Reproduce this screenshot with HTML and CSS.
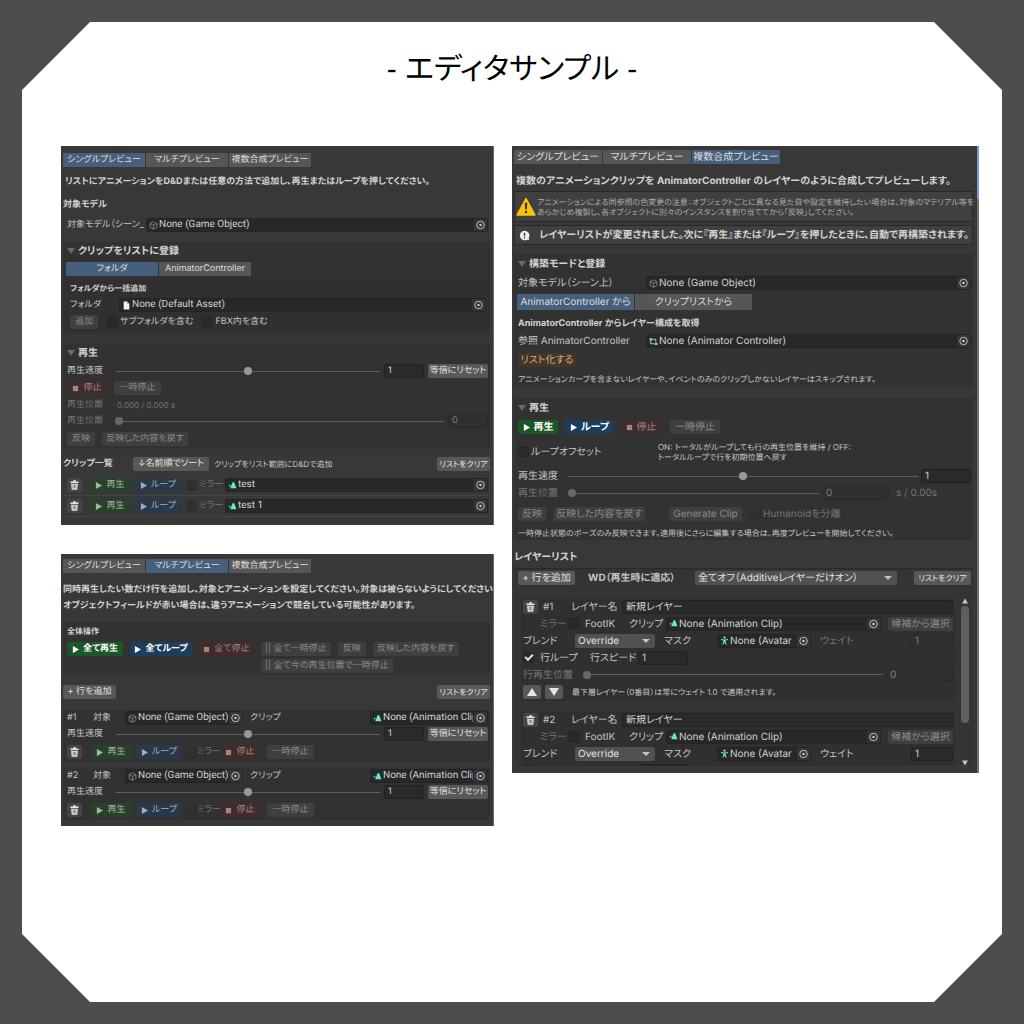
FILE: index.html
```
<!DOCTYPE html>
<html lang="ja">
<head>
    <meta charset="UTF-8">
    <meta name="viewport" content="width=device-width, initial-scale=1">
    <title>エディタサンプル</title>
    <link rel="stylesheet" href="styles.css">
</head>
<body>
    <svg class="symbols" aria-hidden="true">
        <symbol id="cube" viewBox="0 0 16 16"><path d="M8 1.500 14 4.500V11.500L8 14.500 2 11.500V4.500ZM2 4.500 8 7.500 14 4.500M8 7.500V14.500" fill="none" stroke="#a0a0a0" stroke-width="1.200"/></symbol>
        <symbol id="doc" viewBox="0 0 16 16"><path d="M3 1H9L13 5V15H3Z" fill="#f2f2f2"/><path d="M9 1V5H13Z" fill="#a5a5a5"/></symbol>
        <symbol id="clip" viewBox="0 0 16 16"><path d="M8 2H11L15 13H4ZM1 8 4 6V11Z" fill="#6be8cd"/></symbol>
        <symbol id="avatar" viewBox="0 0 16 16"><circle cx="8" cy="3" r="2" fill="#6be8cd"/><path d="M2 5 6 6H10L14 5V7L10 8V10L12 15H10L8 11 6 15H4L6 10V8L2 7Z" fill="#6be8cd"/></symbol>
        <symbol id="controller" viewBox="0 0 16 16"><path d="M1 2H6V6H1ZM10 10H15V14H10Z" fill="#6be8cd"/><path d="M6 4H12V9M3 6V12H9" fill="none" stroke="#d2d2d2" stroke-width="1.500"/></symbol>
        <symbol id="pick" viewBox="0 0 16 16"><circle cx="8" cy="8" r="6" fill="none" stroke="#c4c4c4" stroke-width="1.500"/><circle cx="8" cy="8" r="2" fill="#c4c4c4"/></symbol>
        <symbol id="trash" viewBox="0 0 16 16"><path d="M2 3H6V1H10V3H14V5H2ZM3 6H13L12 15H4Z" fill="#e4e4e4"/><path d="M6 7.500V13M8 7.500V13M10 7.500V13" stroke="#555" stroke-width=".9"/></symbol>
        <symbol id="play" viewBox="0 0 8 8"><path d="M1 0 8 4 1 8Z" fill="currentColor"/></symbol>
        <symbol id="stop" viewBox="0 0 8 8"><path d="M1 1H7V7H1Z" fill="currentColor"/></symbol>
        <symbol id="up" viewBox="0 0 10 10"><path d="M5 1 10 9H0Z" fill="currentColor"/></symbol>
        <symbol id="down" viewBox="0 0 10 10"><path d="M5 9 10 1H0Z" fill="currentColor"/></symbol>
        <symbol id="warning" viewBox="0 0 24 24"><path d="M12 2 22.500 21.500H1.500Z" fill="#ffc107" stroke="#ffc107" stroke-width="2" stroke-linejoin="round"/><path d="M10.500 7H13.500L13 15H11Z" fill="#333"/><circle cx="12" cy="18" r="1.500" fill="#333"/></symbol>
        <symbol id="info" viewBox="0 0 16 16"><path d="M8 1A7 7 0 1 0 12 14L15 15 14 12A7 7 0 0 0 8 1Z" fill="#eee"/><path d="M7 4H9V9H7ZM7 10.500H9V12.500H7Z" fill="#333"/></symbol>
    </svg>

    <main class="sheet">
        <h1>- エディタサンプル -</h1>
        <div class="columns">
            <div class="column">

                <!-- シングルプレビュー -->
                <section class="panel">
                    <div class="tabs">
                        <button class="tab active">シングルプレビュー</button>
                        <button class="tab">マルチプレビュー</button>
                        <button class="tab">複数合成プレビュー</button>
                    </div>
                    <p class="lead">リストにアニメーションをD&amp;Dまたは任意の方法で追加し、再生またはループを押してください。</p>
                    <h2>対象モデル</h2>
                    <div class="row h22">
                        <span class="label target-label">対象モデル（シーン_</span>
                        <button class="object grow"><svg><use href="#cube"/></svg><span>None (Game Object)</span><svg class="pick"><use href="#pick"/></svg></button>
                    </div>

                    <div class="box register">
                        <h3>クリップをリストに登録</h3>
                        <div class="tabs modes">
                            <button class="tab active">フォルダ</button>
                            <button class="tab">AnimatorController</button>
                        </div>
                        <div class="inner">
                            <h4>フォルダから一括追加</h4>
                            <div class="row h16">
                                <span class="label folder-label">フォルダ</span>
                                <button class="object grow"><svg><use href="#doc"/></svg><span>None (Default Asset)</span><svg class="pick"><use href="#pick"/></svg></button>
                            </div>
                            <div class="row h18 folder-options">
                                <button class="btn off apply">追加</button>
                                <label class="check"><input type="checkbox">サブフォルダを含む</label>
                                <label class="check"><input type="checkbox">FBX内を含む</label>
                            </div>
                        </div>
                    </div>

                    <div class="box">
                        <h3>再生</h3>
                        <div class="row h16">
                            <label class="label speed-label" for="speed1">再生速度</label>
                            <input class="grow" type="range" id="speed1" value="50">
                            <input class="num" type="text" value="1" aria-label="再生速度">
                            <button class="btn reset">等倍にリセット</button>
                        </div>
                        <div class="row h18 gap">
                            <button class="btn stop"><svg><use href="#stop"/></svg>停止</button>
                            <button class="btn off pause">一時停止</button>
                        </div>
                        <div class="row h16 dim">
                            <span class="label speed-label">再生位置</span>
                            <span class="time">0.000 / 0.000 s</span>
                        </div>
                        <div class="row h16 dim">
                            <label class="label speed-label" for="pos1">再生位置</label>
                            <input class="grow" type="range" id="pos1" value="0" disabled>
                            <input class="num" type="text" value="0" disabled aria-label="再生位置">
                        </div>
                        <div class="row h20 gap">
                            <button class="btn off apply">反映</button>
                            <button class="btn off revert">反映した内容を戻す</button>
                        </div>
                    </div>

                    <div class="row h22 clips-head">
                        <h2>クリップ一覧</h2>
                        <button class="btn sort">↓名前順でソート</button>
                        <small class="grow">クリップをリスト範囲にD&amp;Dで追加</small>
                        <button class="btn clear">リストをクリア</button>
                    </div>
                    <div class="row clip">
                        <button class="trash" aria-label="削除"><svg><use href="#trash"/></svg></button>
                        <button class="btn play"><svg><use href="#play"/></svg>再生</button>
                        <button class="btn loop"><svg><use href="#play"/></svg>ループ</button>
                        <label class="check mirror"><input type="checkbox" disabled>ミラー</label>
                        <button class="object grow"><svg><use href="#clip"/></svg><span>test</span><svg class="pick"><use href="#pick"/></svg></button>
                    </div>
                    <div class="row clip">
                        <button class="trash" aria-label="削除"><svg><use href="#trash"/></svg></button>
                        <button class="btn play"><svg><use href="#play"/></svg>再生</button>
                        <button class="btn loop"><svg><use href="#play"/></svg>ループ</button>
                        <label class="check mirror"><input type="checkbox" disabled>ミラー</label>
                        <button class="object grow"><svg><use href="#clip"/></svg><span>test 1</span><svg class="pick"><use href="#pick"/></svg></button>
                    </div>
                </section>

                <!-- マルチプレビュー -->
                <section class="panel multi">
                    <div class="tabs">
                        <button class="tab">シングルプレビュー</button>
                        <button class="tab active">マルチプレビュー</button>
                        <button class="tab">複数合成プレビュー</button>
                    </div>
                    <p class="lead">同時再生したい数だけ行を追加し、対象とアニメーションを設定してください。対象は被らないようにしてください<br>オブジェクトフィールドが赤い場合は、違うアニメーションで競合している可能性があります。</p>
                    <div class="box all">
                        <h4>全体操作</h4>
                        <div class="row gap all-buttons">
                            <button class="btn play on"><svg><use href="#play"/></svg>全て再生</button>
                            <button class="btn loop on"><svg><use href="#play"/></svg>全てループ</button>
                            <button class="btn stop"><svg><use href="#stop"/></svg>全て停止</button>
                            <div class="pause-group">
                                <button class="btn off">|| 全て一時停止</button>
                                <button class="btn off apply">反映</button>
                                <button class="btn off revert">反映した内容を戻す</button>
                                <button class="btn off">|| 全て今の再生位置で一時停止</button>
                            </div>
                        </div>
                    </div>
                    <div class="row h20 add-row">
                        <button class="btn add">+ 行を追加</button>
                        <button class="btn clear">リストをクリア</button>
                    </div>
                    <div class="item">
                        <div class="row h16">
                            <span class="label num-label">#1</span>
                            <span class="label obj-label">対象</span>
                            <button class="object fixed"><svg><use href="#cube"/></svg><span>None (Game Object)</span><svg class="pick"><use href="#pick"/></svg></button>
                            <span class="label clip-label grow">クリップ</span>
                            <button class="object fixed"><svg><use href="#clip"/></svg><span>None (Animation Clip</span><svg class="pick"><use href="#pick"/></svg></button>
                        </div>
                        <div class="row h16">
                            <label class="label speed-label" for="speed2">再生速度</label>
                            <input class="grow" type="range" id="speed2" value="50">
                            <input class="num" type="text" value="1" aria-label="再生速度">
                            <button class="btn reset">等倍にリセット</button>
                        </div>
                        <div class="row h20 item-buttons">
                            <button class="trash" aria-label="削除"><svg><use href="#trash"/></svg></button>
                            <button class="btn play"><svg><use href="#play"/></svg>再生</button>
                            <button class="btn loop"><svg><use href="#play"/></svg>ループ</button>
                            <label class="check mirror"><input type="checkbox" disabled>ミラー</label>
                            <button class="btn stop"><svg><use href="#stop"/></svg>停止</button>
                            <button class="btn off pause">一時停止</button>
                        </div>
                    </div>
                    <div class="item">
                        <div class="row h16">
                            <span class="label num-label">#2</span>
                            <span class="label obj-label">対象</span>
                            <button class="object fixed"><svg><use href="#cube"/></svg><span>None (Game Object)</span><svg class="pick"><use href="#pick"/></svg></button>
                            <span class="label clip-label grow">クリップ</span>
                            <button class="object fixed"><svg><use href="#clip"/></svg><span>None (Animation Clip</span><svg class="pick"><use href="#pick"/></svg></button>
                        </div>
                        <div class="row h16">
                            <label class="label speed-label" for="speed3">再生速度</label>
                            <input class="grow" type="range" id="speed3" value="50">
                            <input class="num" type="text" value="1" aria-label="再生速度">
                            <button class="btn reset">等倍にリセット</button>
                        </div>
                        <div class="row h20 item-buttons">
                            <button class="trash" aria-label="削除"><svg><use href="#trash"/></svg></button>
                            <button class="btn play"><svg><use href="#play"/></svg>再生</button>
                            <button class="btn loop"><svg><use href="#play"/></svg>ループ</button>
                            <label class="check mirror"><input type="checkbox" disabled>ミラー</label>
                            <button class="btn stop"><svg><use href="#stop"/></svg>停止</button>
                            <button class="btn off pause">一時停止</button>
                        </div>
                    </div>
                </section>
            </div>

            <!-- 複数合成プレビュー -->
            <section class="panel large">
                <div class="tabs">
                    <button class="tab">シングルプレビュー</button>
                    <button class="tab">マルチプレビュー</button>
                    <button class="tab active">複数合成プレビュー</button>
                </div>
                <p class="lead">複数のアニメーションクリップを AnimatorController のレイヤーのように合成してプレビューします。</p>
                <div class="help">
                    <svg class="warning"><use href="#warning"/></svg>
                    <p>アニメーションによる同参照の色変更の注意：オブジェクトごとに異なる見た目や設定を維持したい場合は、対象のマテリアル等を<br>あらかじめ複製し、各オブジェクトに別々のインスタンスを割り当ててから「反映」してください。</p>
                </div>
                <div class="help notice">
                    <svg><use href="#info"/></svg>
                    <p>レイヤーリストが変更されました。次に『再生』または『ループ』を押したときに、自動で再構築されます。</p>
                </div>

                <div class="box build">
                    <h3>構築モードと登録</h3>
                    <div class="row h18">
                        <span class="label ref-label">対象モデル（シーン上）</span>
                        <button class="object grow"><svg><use href="#cube"/></svg><span>None (Game Object)</span><svg class="pick"><use href="#pick"/></svg></button>
                    </div>
                    <div class="tabs modes">
                        <button class="tab active">AnimatorController から</button>
                        <button class="tab">クリップリストから</button>
                    </div>
                    <h4>AnimatorController からレイヤー構成を取得</h4>
                    <div class="row h16">
                        <span class="label ref-label">参照 AnimatorController</span>
                        <button class="object grow"><svg><use href="#controller"/></svg><span>None (Animator Controller)</span><svg class="pick"><use href="#pick"/></svg></button>
                    </div>
                    <div class="row h22"><button class="btn listup">リスト化する</button></div>
                    <div class="row h16"><small>アニメーションカーブを含まないレイヤーや、イベントのみのクリップしかないレイヤーはスキップされます。</small></div>
                </div>

                <div class="box">
                    <h3>再生</h3>
                    <div class="row h18 gap">
                        <button class="btn play on"><svg><use href="#play"/></svg>再生</button>
                        <button class="btn loop on"><svg><use href="#play"/></svg>ループ</button>
                        <button class="btn stop"><svg><use href="#stop"/></svg>停止</button>
                        <button class="btn off pause">一時停止</button>
                    </div>
                    <div class="row offset">
                        <label class="check"><input type="checkbox">ループオフセット</label>
                        <small>ON: トータルがループしても行の再生位置を維持 / OFF:<br>トータルループで行を初期位置へ戻す</small>
                    </div>
                    <div class="row h18">
                        <label class="label speed-label" for="speed4">再生速度</label>
                        <input class="grow" type="range" id="speed4" value="50">
                        <input class="num" type="text" value="1" aria-label="再生速度">
                    </div>
                    <div class="row h16 dim">
                        <label class="label speed-label" for="pos4">再生位置</label>
                        <input class="grow" type="range" id="pos4" value="0" disabled>
                        <input class="num wide" type="text" value="0" disabled aria-label="再生位置">
                        <span class="total">s / 0.00s</span>
                    </div>
                    <div class="row apply-row">
                        <button class="btn off apply">反映</button>
                        <button class="btn off revert">反映した内容を戻す</button>
                        <button class="btn off generate">Generate Clip</button>
                        <label class="check dim"><input type="checkbox" disabled>Humanoidを分離</label>
                    </div>
                    <div class="row pose-note"><small>一時停止状態のポーズのみ反映できます。適用後にさらに編集する場合は、再度プレビューを開始してください。</small></div>
                </div>

                <h2>レイヤーリスト</h2>
                <div class="layers">
                    <div class="row h18 layers-head">
                        <button class="btn add">+ 行を追加</button>
                        <b class="wd">WD（再生時に適応）</b>
                        <span class="select wd-mode"><select aria-label="WD"><option>全てオフ（Additiveレイヤーだけオン）</option></select></span>
                        <button class="btn clear">リストをクリア</button>
                    </div>
                    <div class="scroll">
                        <div class="view">
                            <div class="layer">
                                <div class="row">
                                    <button class="trash" aria-label="削除"><svg><use href="#trash"/></svg></button>
                                    <span class="label no">#1</span>
                                    <label class="label name-label" for="name1">レイヤー名</label>
                                    <input class="text grow" type="text" id="name1" value="新規レイヤー">
                                </div>
                                <div class="row">
                                    <label class="check mirror"><input type="checkbox" disabled>ミラー</label>
                                    <label class="check footik"><input type="checkbox">FootIK</label>
                                    <span class="label clip-label">クリップ</span>
                                    <button class="object grow"><svg><use href="#clip"/></svg><span>None (Animation Clip)</span><svg class="pick"><use href="#pick"/></svg></button>
                                    <button class="btn off candidate">候補から選択</button>
                                </div>
                                <div class="row">
                                    <label class="label blend-label" for="blend1">ブレンド</label>
                                    <span class="select blend"><select id="blend1"><option>Override</option></select></span>
                                    <span class="label mask-label">マスク</span>
                                    <button class="object mask"><svg><use href="#avatar"/></svg><span>None (Avatar</span><svg class="pick"><use href="#pick"/></svg></button>
                                    <label class="label weight-label dim grow" for="weight1">ウェイト</label>
                                    <input class="num weight" type="text" id="weight1" value="1" disabled>
                                </div>
                                <div class="row">
                                    <label class="check row-loop"><input type="checkbox" checked>行ループ</label>
                                    <label class="label row-speed" for="rs1">行スピード</label>
                                    <input class="num" type="text" id="rs1" value="1">
                                </div>
                                <div class="row dim">
                                    <label class="label row-pos" for="rp1">行再生位置</label>
                                    <input class="grow" type="range" id="rp1" value="0" disabled>
                                    <input class="num wide" type="text" value="0" disabled aria-label="行再生位置">
                                </div>
                                <div class="row order">
                                    <button class="btn move" aria-label="上へ"><svg><use href="#up"/></svg></button>
                                    <button class="btn move" aria-label="下へ"><svg><use href="#down"/></svg></button>
                                    <small>最下層レイヤー（0番目）は常にウェイト 1.0 で適用されます。</small>
                                </div>
                            </div>
                            <div class="layer">
                                <div class="row">
                                    <button class="trash" aria-label="削除"><svg><use href="#trash"/></svg></button>
                                    <span class="label no">#2</span>
                                    <label class="label name-label" for="name2">レイヤー名</label>
                                    <input class="text grow" type="text" id="name2" value="新規レイヤー">
                                </div>
                                <div class="row">
                                    <label class="check mirror"><input type="checkbox" disabled>ミラー</label>
                                    <label class="check footik"><input type="checkbox">FootIK</label>
                                    <span class="label clip-label">クリップ</span>
                                    <button class="object grow"><svg><use href="#clip"/></svg><span>None (Animation Clip)</span><svg class="pick"><use href="#pick"/></svg></button>
                                    <button class="btn off candidate">候補から選択</button>
                                </div>
                                <div class="row">
                                    <label class="label blend-label" for="blend2">ブレンド</label>
                                    <span class="select blend"><select id="blend2"><option>Override</option></select></span>
                                    <span class="label mask-label">マスク</span>
                                    <button class="object mask"><svg><use href="#avatar"/></svg><span>None (Avatar</span><svg class="pick"><use href="#pick"/></svg></button>
                                    <label class="label weight-label grow" for="weight2">ウェイト</label>
                                    <input class="num weight" type="text" id="weight2" value="1">
                                </div>
                                <div class="row next">
                                    <div class="check"><input type="checkbox" aria-label="行ループ"></div>
                                    <input class="num" type="text" aria-label="行スピード">
                                </div>
                            </div>
                        </div>
                        <div class="bar">
                            <svg><use href="#up"/></svg>
                            <div class="track"><div class="thumb"></div></div>
                            <svg><use href="#down"/></svg>
                        </div>
                    </div>
                </div>
            </section>
        </div>
    </main>
</body>
</html>
```
FILE: styles.css
```
* {
    box-sizing: border-box;
}
body {
    margin: 0;
    min-height: 100vh;
    display: flex;
    padding: 22px;
    background: #4d4d4d;
    font-family: Inter, "Noto Sans CJK JP", sans-serif;
    font-feature-settings: "palt", "kern";
    text-rendering: geometricPrecision;
}
.symbols {
    display: none;
}
.sheet {
    flex: 1;
    min-width: 0;
    padding: 0 23px 39px 39px;
    background: #fff;
    clip-path: polygon(68px 0, calc(100% - 68px) 0, 100% 68px, 100% calc(100% - 68px), calc(100% - 68px) 100%, 68px 100%, 0 calc(100% - 68px), 0 68px);
}
h1 {
    margin: 26px 16px 54px 0;
    font-family: "Liberation Sans", "Noto Sans CJK JP", sans-serif;
    font-size: 30px;
    font-weight: 400;
    line-height: 44px;
    text-align: center;
    color: #000;
}
.columns {
    display: grid;
    grid-template-columns: 433fr 467fr;
    gap: 18px;
    align-items: start;
}
.column {
    display: flex;
    flex-direction: column;
    gap: 29px;
    min-width: 0;
}

/* パネル共通 */
.panel {
    min-width: 0;
    padding: 6px 3px 8px 2px;
    background: #383838;
    border-right: 1px solid #6a6a6a;
    color: #c4c4c4;
    font-size: 9px;
    line-height: 14px;
}
button, input, select {
    font: inherit;
    font-feature-settings: inherit;
    text-rendering: inherit;
    color: inherit;
    margin: 0;
    padding: 0;
    border: none;
    border-radius: 2px;
}
button, label, small, h2, h3, h4, b {
    white-space: nowrap;
}
.row {
    display: flex;
    align-items: center;
    padding: 0 2px 0 4px;
}
.gap {
    gap: 7px;
}
.grow {
    flex: 1;
    min-width: 0;
}
.h16 { height: 16px; }
.h18 { height: 18px; }
.h20 { height: 20px; }
.h22 { height: 22px; }
.dim {
    color: #757575;
}
.label {
    flex: none;
    white-space: nowrap;
}
.label.grow {
    flex: 1;
}
h2, h3, h4 {
    margin: 0;
    font-size: 9px;
    line-height: 18px;
    color: #d2d2d2;
}
h3 {
    display: flex;
    align-items: center;
    gap: 3px;
    padding-left: 4px;
    font-size: 10px;
    line-height: 20px;
}
h3::before {
    content: "";
    border: 4px solid transparent;
    border-top: 6px solid #6a6a6a;
    border-bottom: none;
}
h4 {
    font-size: 8px;
}
small {
    font-size: 8px;
    line-height: 10px;
}
.lead {
    margin: 6px 2px;
    font-size: 9px;
    font-weight: 700;
    line-height: 16px;
    color: #d2d2d2;
    white-space: nowrap;
}
.tabs {
    display: flex;
    gap: 1px;
    height: 16px;
    padding: 1px 0;
}
.tab {
    width: 82px;
    background: #565656;
    border-radius: 0;
    color: #dcdcdc;
    line-height: 14px;
}
.tab.active {
    background: #46607c;
}
.modes {
    height: 18px;
    padding: 2px 3px;
}
.modes .tab {
    width: 92px;
}
.box {
    background: #323232;
}

/* ボタン */
.btn {
    flex: none;
    display: flex;
    align-items: center;
    justify-content: center;
    gap: 4px;
    height: 14px;
    background: #585858;
    color: #e4e4e4;
}
.btn svg {
    width: 7px;
    height: 7px;
}
.btn.off {
    padding: 0 4px;
    background: #3f3f3f;
    color: #8a8a8a;
}
.btn.play {
    width: 40px;
    background: #274229;
    color: #a8b3a8;
}
.btn.loop {
    width: 46px;
    background: #29394a;
    color: #a3adb8;
}
.btn.stop {
    width: 40px;
    background: #412b2b;
    color: #9c8686;
}
.btn.play.on {
    background: #1b5727;
    color: #fff;
    font-weight: 700;
}
.btn.loop.on {
    background: #1d3d5c;
    color: #fff;
    font-weight: 700;
}
.pause { width: 47px; }
.apply { width: 28px; }
.revert { width: 86px; }
.reset { width: 60px; }
.clear {
    width: 53px;
    font-size: 8px;
}
.add { width: 53px; }
.trash {
    flex: none;
    width: 15px;
    height: 14px;
    background: #454545;
    line-height: 0;
}
.trash svg {
    width: 11px;
    height: 12px;
}

/* 入力欄 */
.object {
    display: flex;
    align-items: center;
    gap: 1px;
    height: 14px;
    padding: 0 0 0 2px;
    background: #282828;
    border: 1px solid #242424;
    color: #d2d2d2;
    font-family: Roboto, "Noto Sans CJK JP", sans-serif;
    font-size: 10px;
    text-align: left;
}
.object svg {
    flex: none;
    width: 9px;
    height: 9px;
}
.object span {
    flex: 1;
    min-width: 0;
    overflow: hidden;
    line-height: 12px;
}
.object .pick {
    width: 13px;
    height: 12px;
    padding: 1px;
    background: #353535;
}
.num, .text {
    width: 40px;
    height: 14px;
    padding: 0 3px;
    background: #2a2a2a;
    border: 1px solid #222;
    color: #d2d2d2;
}
.num:disabled {
    background: #303030;
    border-color: #2a2a2a;
    color: #7d7d7d;
}
input[type="range"] {
    appearance: none;
    height: 10px;
    margin-right: 3px;
    background: linear-gradient(#5e5e5e, #5e5e5e) center / 100% 1px no-repeat;
}
input[type="range"]::-webkit-slider-thumb {
    appearance: none;
    width: 8px;
    height: 8px;
    border-radius: 50%;
    background: #999;
}
input[type="range"]:disabled::-webkit-slider-thumb {
    background: #686868;
}
.check {
    flex: none;
    display: flex;
    align-items: center;
    gap: 2px;
}
.check input {
    appearance: none;
    flex: none;
    width: 11px;
    height: 11px;
    background: #2a2a2a;
    border: 1px solid #252525;
}
.check input:disabled {
    background: #303030;
    border-color: #2d2d2d;
}
.check input:checked::before {
    content: "";
    display: block;
    width: 6px;
    height: 3px;
    margin: 1px;
    border: solid #e4e4e4;
    border-width: 0 0 2px 2px;
    transform: rotate(-45deg);
}
.mirror {
    color: #757575;
}
.select {
    position: relative;
    display: flex;
}
.select select {
    appearance: none;
    width: 100%;
    height: 14px;
    padding: 0 3px;
    background: #515151;
    color: #e4e4e4;
}
.select::after {
    content: "";
    position: absolute;
    top: 5px;
    right: 5px;
    border: 4px solid transparent;
    border-top-color: #c4c4c4;
    border-bottom: none;
}

/* シングル */
.target-label { width: 79px; }
.speed-label { width: 48px; }
.folder-label { width: 49px; }
.register {
    margin: 6px 0 8px;
    padding-bottom: 4px;
}
.register h3 {
    line-height: 18px;
}
.inner {
    margin-right: 2px;
    padding-left: 3px;
    background: #303030;
}
.inner h4 {
    padding: 1px 4px 0;
}
.folder-options {
    gap: 9px;
}
.num + .reset {
    margin-left: 4px;
}
.time {
    padding-left: 2px;
    font-size: 8px;
}
.clips-head {
    margin-top: 4px;
    padding: 0;
}
.clips-head h2 {
    width: 70px;
}
.sort {
    width: 76px;
    margin-right: 5px;
}
.clip {
    height: 21px;
    border-bottom: 1px solid #454545;
    gap: 5px;
}
.clip .play {
    margin-left: 3px;
}
.clip .mirror {
    width: 34px;
}

/* マルチ */
.multi {
    padding-top: 4px;
    padding-bottom: 0;
}
.multi .lead {
    margin: 8px 0;
}
.all {
    padding-bottom: 2px;
}
.all h4 {
    padding: 0 4px 2px;
}
.all-buttons {
    align-items: flex-start;
}
.all .play { width: 56px; }
.all .loop { width: 62px; }
.all .stop { width: 55px; }
.pause-group {
    flex: 1;
    display: flex;
    flex-wrap: wrap;
    gap: 3px 7px;
}
.add-row {
    justify-content: space-between;
    margin: 7px 0 8px;
    padding: 0;
}
.item {
    margin-bottom: 6px;
    background: #323232;
}
.num-label { width: 26px; }
.obj-label { width: 32px; }
.fixed { width: 118px; }
.multi .clip-label { padding-left: 7px; }
.item-buttons .play { margin-left: 9px; }
.item-buttons .loop { margin-left: 5px; }
.item-buttons .mirror { width: 34px; margin-left: 4px; }
.item-buttons .pause { margin-left: 7px; }
.item-buttons .check { gap: 0; }

/* 複数合成 */
.large {
    padding: 3px 4px 7px 2px;
    font-size: 10px;
    border-right: 2px solid;
    border-image: linear-gradient(#7a9bd0 54px, #6e6e6e 54px) 1;
}
.large .tab { width: 88px; }
.large .lead {
    margin: 8px 2px 2px;
    font-size: 10px;
}
.help {
    display: flex;
    align-items: center;
    gap: 1px;
    height: 31px;
    padding: 0 1px;
    background: #404040;
    border: 1px solid #282828;
    color: #aaa;
    font-size: 8px;
    line-height: 10px;
    white-space: nowrap;
}
.help p {
    margin: 0;
}
.help svg {
    flex: none;
}
.help .warning {
    width: 20px;
    height: 22px;
}
.notice {
    height: 20px;
    gap: 9px;
    margin: 3px 0 9px;
    padding: 0 4px;
    color: #d2d2d2;
    font-size: 10px;
    font-weight: 700;
}
.notice svg {
    width: 11px;
    height: 11px;
}
.large .object {
    font-family: inherit;
}
.build {
    margin-bottom: 11px;
}
.build .modes {
    height: 20px;
}
.large .modes .tab {
    width: 117px;
}
.build h4 {
    padding: 3px 4px 0;
    font-size: 9px;
}
.ref-label { width: 128px; }
.listup {
    width: 58px;
    background: #453626;
    color: #c9b28f;
}
.large .loop { width: 49px; }
.large .pause { width: 50px; margin-left: 2px; }
.offset {
    height: 31px;
}
.offset .check {
    width: 140px;
}
.large .speed-label { width: 50px; }
.large .num { width: 50px; }
.large .num.wide { width: 67px; }
.total {
    width: 82px;
    padding-left: 7px;
}
.apply-row {
    height: 25px;
    gap: 8px;
}
.large .revert { width: 91px; }
.generate {
    width: 73px;
    margin-left: 16px;
}
.pose-note {
    height: 14px;
}
.large h2 {
    padding: 8px 0 2px;
    font-size: 10px;
}
.layers {
    border-top: 1px solid #2a2a2a;
    background: #343434;
}
.layers-head .add { width: 57px; margin-right: 13px; }
.layers-head .clear { width: 57px; margin-left: auto; }
.wd { width: 107px; }
.wd-mode { width: 202px; }
.scroll {
    display: flex;
    height: 179px;
    padding: 11px 4px 0 7px;
}
.view {
    flex: 1;
    min-width: 0;
    overflow: hidden;
}
.layer {
    margin-bottom: 10px;
    padding-bottom: 1px;
    background: #303030;
}
.layer .row {
    height: 17px;
    padding: 0 2px;
}
.no { width: 33px; padding-left: 5px; }
.name-label { width: 51px; }
.layer .mirror { width: 45px; gap: 6px; }
.footik { width: 61px; gap: 6px; }
.layer .clip-label { width: 37px; }
.candidate { width: 65px; margin-left: 7px; }
.blend-label { width: 52px; }
.blend { width: 80px; margin-right: 9px; }
.mask-label { width: 53px; }
.mask { width: 94px; margin-right: 9px; }
.layer .weight { width: 42px; }
.row-loop { width: 67px; gap: 6px; }
.row-speed { width: 48px; }
.row-pos { width: 60px; }
.next {
    gap: 104px;
}
.order .btn {
    width: 18px;
    margin-right: 4px;
}
.order small {
    margin-left: 5px;
}
.btn.move svg {
    width: 10px;
    height: 10px;
}
.bar {
    width: 9px;
    margin-left: 5px;
    display: flex;
    flex-direction: column;
    align-items: center;
}
.bar svg {
    width: 6px;
    height: 6px;
}
.track {
    flex: 1;
    width: 8px;
    padding: 2px 0;
}
.thumb {
    height: 77%;
    border-radius: 4px;
    background: #5f5f5f;
}
```
